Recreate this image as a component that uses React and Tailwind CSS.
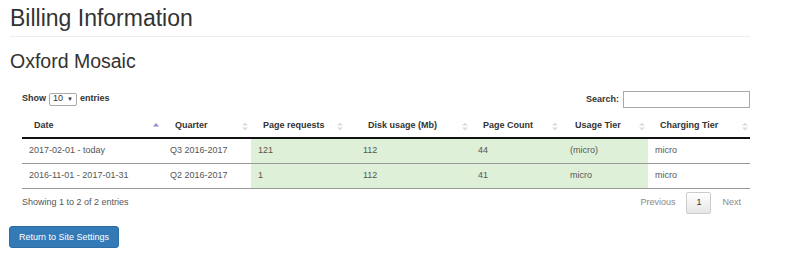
import React from 'react';

const columns = [
  { label: 'Date', width: 'w-[141px]', pad: 'pr-[4px]', sort: 'asc' },
  { label: 'Quarter', width: 'w-[88px]', pad: 'pr-[3px]' },
  { label: 'Page requests', width: 'w-[105px]', pad: 'pr-[13px]' },
  { label: 'Disk usage (Mb)', width: 'w-[115px]', pad: 'pr-[3px]' },
  { label: 'Page Count', width: 'w-[92px]', pad: 'pr-[5px]' },
  { label: 'Usage Tier', width: 'w-[85px]', pad: 'pr-[3px]' },
  { label: 'Charging Tier', width: 'w-[102px]', pad: 'pr-[2px]' },
];

const rows = [
  ['2017-02-01 - today', 'Q3 2016-2017', '121', '112', '44', '(micro)', 'micro'],
  ['2016-11-01 - 2017-01-31', 'Q2 2016-2017', '1', '112', '41', 'micro', 'micro'],
];

// columns 2..5 are highlighted usage figures
const highlighted = [2, 3, 4, 5];

const SortIcon = ({ dir }) => {
  if (dir === 'asc') {
    return (
      <svg width="6" height="8" viewBox="0 0 6 8" className="shrink-0">
        <path d="M0 4.5 L3 1 L6 4.5 Z" fill="#8c8cd6" />
      </svg>
    );
  }
  return (
    <svg width="6" height="9" viewBox="0 0 6 9" className="shrink-0">
      <path d="M0 3.5 L3 0.5 L6 3.5 Z" fill="#dcdcdc" />
      <path d="M0 5.5 L3 8.5 L6 5.5 Z" fill="#dcdcdc" />
    </svg>
  );
};

const App = () => {
  return (
    <div className="w-[800px] h-[267px] bg-white text-[#333] overflow-hidden" style={{ fontFamily: '"Liberation Sans", Arial, sans-serif' }}>
      <div className="pl-[10px] pr-[50px]">
        <h1 className="text-[23px] leading-[26px] pt-[5px] pb-[5px] border-b border-[#eee]">Billing Information</h1>
        <h2 className="text-[19.5px] leading-[22px] mt-[13px]">Oxford Mosaic</h2>
      </div>

      <div className="ml-[22px] w-[728px] mt-[19px]">
        <div className="flex items-center justify-between text-[9px] font-bold">
          <div className="flex items-center gap-[3px] -mt-[1px]">
            <span>Show</span>
            <div className="flex items-center gap-[4px] border border-[#aaa] rounded-[2px] px-[3px] h-[13px] font-normal text-[9px]">
              <span>10</span>
              <span className="text-[6px]">▼</span>
            </div>
            <span>entries</span>
          </div>
          <div className="flex items-center gap-[4px]">
            <span>Search:</span>
            <div className="w-[127px] h-[17px] border border-[#aaa] bg-white" />
          </div>
        </div>

        <table className="border-collapse mt-[3px] text-[9px] table-fixed w-[728px]">
          <thead>
            <tr className="border-b-2 border-[#111]">
              {columns.map((c) => (
                <th key={c.label} className={`${c.width} h-[27px] font-bold text-left p-0`}>
                  <div className={`flex items-center justify-between pt-[4px] pl-[12px] ${c.pad}`}>
                    <span>{c.label}</span>
                    <SortIcon dir={c.sort} />
                  </div>
                </th>
              ))}
            </tr>
          </thead>
          <tbody>
            {rows.map((r, i) => (
              <tr key={i} className="border-b border-[#999]">
                {r.map((cell, j) => (
                  <td
                    key={j}
                    className={`h-[25px] py-0 pr-0 pl-[7px] text-[#555] ${highlighted.includes(j) ? 'bg-[#dff0d8]' : ''}`}
                  >
                    {cell}
                  </td>
                ))}
              </tr>
            ))}
          </tbody>
        </table>

        <div className="flex items-center justify-between mt-[3px] text-[9px] text-[#555]">
          <span>Showing 1 to 2 of 2 entries</span>
          <div className="flex items-center mr-[9px]">
            <span className="text-[#888] mr-[11px]">Previous</span>
            <div className="w-[25px] h-[22px] border border-[#ccc] rounded-[2px] bg-gradient-to-b from-white to-[#e6e6e6] flex items-center justify-center text-[#333]">1</div>
            <span className="text-[#888] ml-[11px]">Next</span>
          </div>
        </div>
      </div>

      <div className="pl-[9px] mt-[9px]">
        <button className="h-[22px] px-[9px] bg-[#337ab7] border border-[#2e6da4] rounded-[3px] text-white text-[9px]">
          Return to Site Settings
        </button>
      </div>
    </div>
  );
};

export default App;
